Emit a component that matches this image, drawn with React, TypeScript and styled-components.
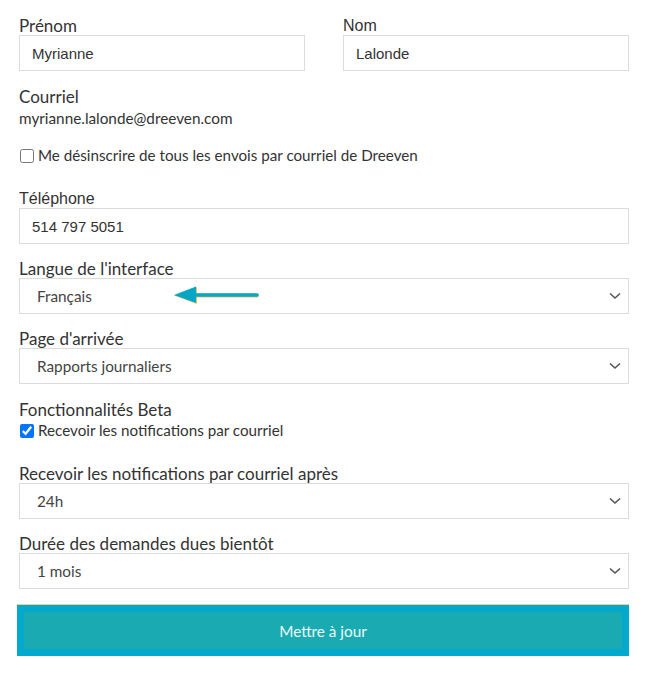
import styled, { createGlobalStyle } from "styled-components";

const GlobalStyle = createGlobalStyle`
  body {
    margin: 0;
    background: #fff;
    font-family: Lato, "Liberation Sans", sans-serif;
    color: #333;
  }
`;

const Form = styled.form`
  width: 610px;
  padding: 16px 18px 18px 19px;
`;

const Row = styled.div`
  display: grid;
  grid-template-columns: 286px 286px;
  column-gap: 38px;
`;

const Field = styled.div<{ $gap?: number }>`
  display: flex;
  flex-direction: column;
  margin-bottom: ${(p) => p.$gap ?? 15}px;
  position: relative;
`;

const Label = styled.label<{ $plain?: boolean }>`
  font-family: ${(p) => (p.$plain ? '"Liberation Sans", Arial' : "Lato")}, sans-serif;
  font-size: ${(p) => (p.$plain ? 16 : 17)}px;
  line-height: 19px;
  color: #333;
`;

const TextInput = styled.input`
  box-sizing: border-box;
  height: 36px;
  border: 1px solid #dcdcdc;
  padding: 0 12px;
  font-family: "Liberation Sans", Arial, sans-serif;
  font-size: 15px;
  color: #333;
  background: #fff;
  outline: none;
`;

const Value = styled.div`
  font-size: 15.3px;
  line-height: 21px;
  margin-top: 2px;
`;

const CheckRow = styled.label`
  display: flex;
  align-items: center;
  gap: 4px;
  font-size: 15.2px;
  line-height: 19px;
  color: #333;

  input {
    margin: 0 0 0 1px;
    width: 14px;
    height: 14px;
  }
`;

const SelectBox = styled.div`
  box-sizing: border-box;
  height: 36px;
  border: 1px solid #dcdcdc;
  display: flex;
  align-items: center;
  justify-content: space-between;
  padding: 0 7px 0 17px;
  font-size: 15.3px;
  color: #444;
  background: #fff;
`;

const Annotation = styled.svg`
  position: absolute;
  left: 154px;
  top: 27px;
`;

const SubmitButton = styled.button`
  box-sizing: border-box;
  width: 612px;
  height: 51px;
  margin: 1px 0 0 -2px;
  background: #1aabb2;
  border: 7px solid #03a9cc;
  box-shadow: 0 -1px 0 #f3d08a;
  color: #eef8f8;
  font-family: Lato, sans-serif;
  font-size: 15.3px;
  cursor: pointer;
`;

function Chevron() {
  return (
    <svg width="12" height="8" viewBox="0 0 12 8">
      <path d="M1 1.5 L6 6 L11 1.5" fill="none" stroke="#555" strokeWidth="1.6" />
    </svg>
  );
}

function Select({ value }: { value: string }) {
  return (
    <SelectBox>
      <span>{value}</span>
      <Chevron />
    </SelectBox>
  );
}

export default function App() {
  return (
    <>
      <GlobalStyle />
      <Form onSubmit={(e) => e.preventDefault()}>
        <Row>
          <Field $gap={16}>
            <Label>Prénom</Label>
            <TextInput defaultValue="Myrianne" />
          </Field>
          <Field $gap={16}>
            <Label $plain>Nom</Label>
            <TextInput defaultValue="Lalonde" />
          </Field>
        </Row>

        <Field $gap={17}>
          <Label>Courriel</Label>
          <Value>myrianne.lalonde@dreeven.com</Value>
        </Field>

        <Field $gap={24}>
          <CheckRow>
            <input type="checkbox" />
            Me désinscrire de tous les envois par courriel de Dreeven
          </CheckRow>
        </Field>

        <Field>
          <Label $plain>Téléphone</Label>
          <TextInput defaultValue="514 797 5051" />
        </Field>

        <Field>
          <Label>Langue de l'interface</Label>
          <Select value="Français" />
          <Annotation width="88" height="18" viewBox="0 0 88 18">
            <path d="M22 9.5 H84" stroke="#f0c060" strokeWidth="4" strokeLinecap="round" />
            <path d="M1 9.5 L24 1 L24 18 Z" fill="#f0c060" />
            <path d="M22 9 H84" stroke="#05a6c6" strokeWidth="3.5" strokeLinecap="round" />
            <path d="M1 9 L23 0.5 L23 17 Z" fill="#05a6c6" />
          </Annotation>
        </Field>

        <Field $gap={16}>
          <Label>Page d'arrivée</Label>
          <Select value="Rapports journaliers" />
        </Field>

        <Field $gap={2}>
          <Label>Fonctionnalités Beta</Label>
        </Field>
        <Field $gap={24}>
          <CheckRow>
            <input type="checkbox" defaultChecked />
            Recevoir les notifications par courriel
          </CheckRow>
        </Field>

        <Field>
          <Label>Recevoir les notifications par courriel après</Label>
          <Select value="24h" />
        </Field>

        <Field>
          <Label>Durée des demandes dues bientôt</Label>
          <Select value="1 mois" />
        </Field>

        <SubmitButton type="submit">Mettre à jour</SubmitButton>
      </Form>
    </>
  );
}
